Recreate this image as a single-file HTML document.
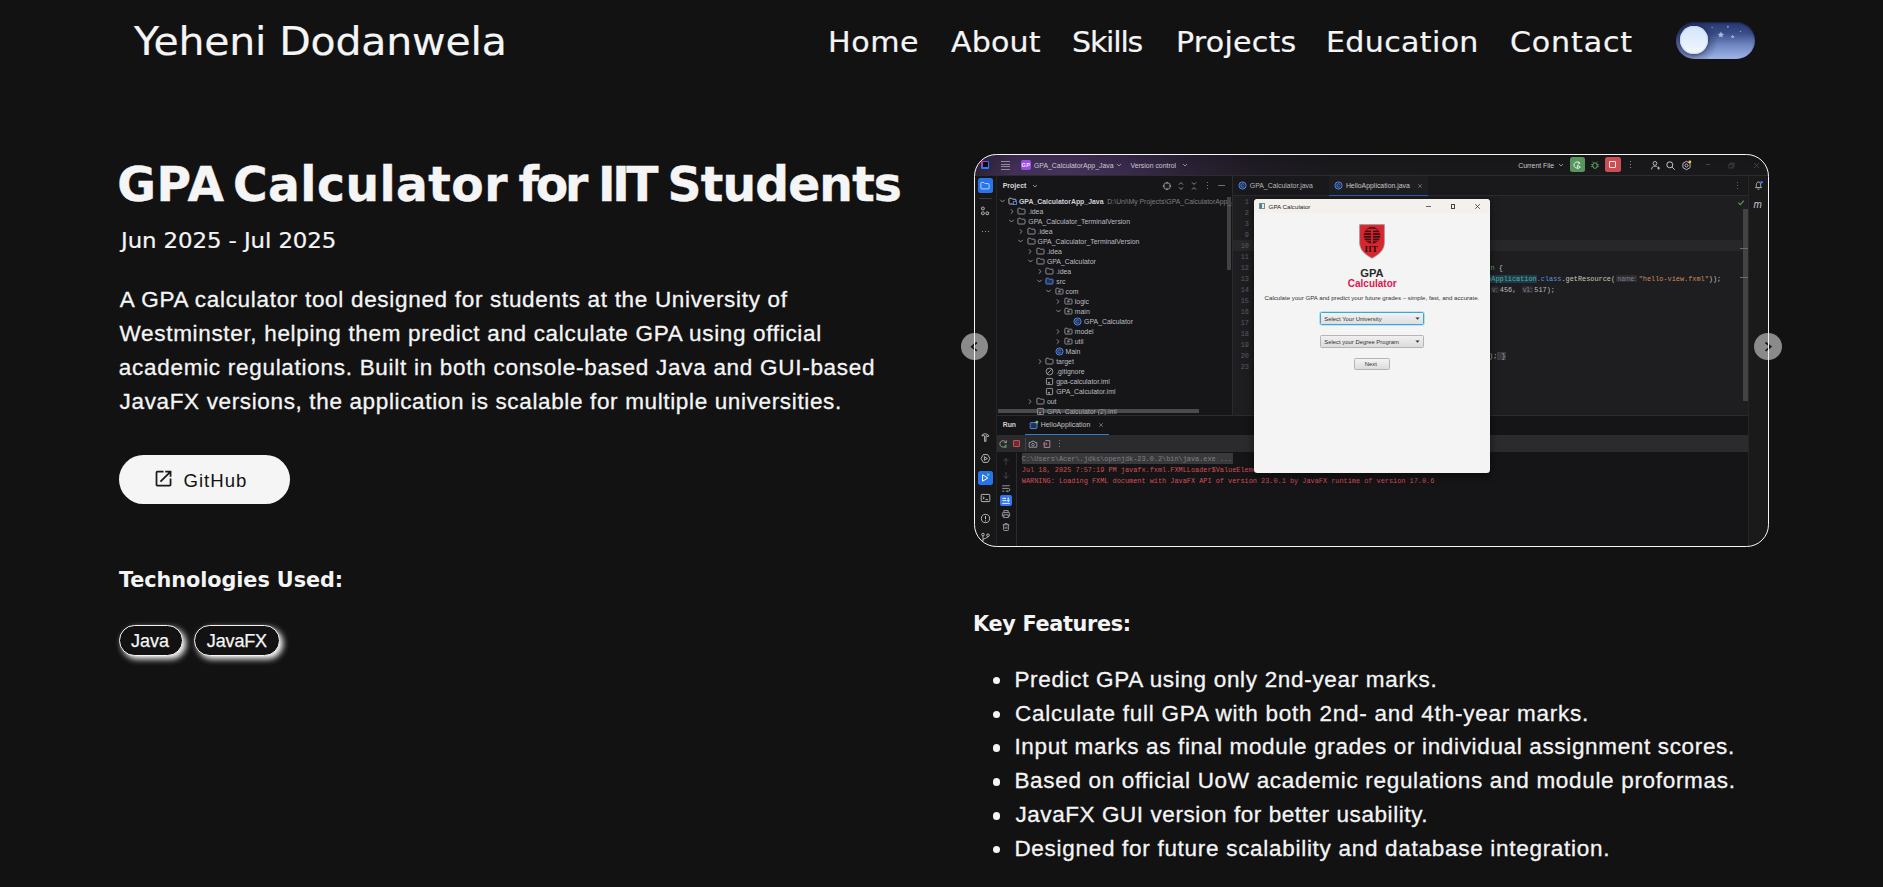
<!DOCTYPE html>
<html lang="en">
<head>
<meta charset="utf-8">
<title>GPA Calculator for IIT Students - Yeheni Dodanwela</title>
<style>
*{box-sizing:border-box;margin:0;padding:0}
html,body{width:1883px;height:887px;overflow:hidden;background:#121212}
body{position:relative;color:#f5f5f5;font-family:"Liberation Sans",sans-serif}
.abs{position:absolute;white-space:nowrap}
.z{position:absolute;left:0;top:0;width:0;height:0}
a{color:inherit;text-decoration:none}
ul{list-style:none}
h1,h3,p{font:inherit}
li{display:block}
.pop{font-family:"DejaVu Sans","Liberation Sans",sans-serif;transform:scaleX(1.07);transform-origin:0 50%;-webkit-text-stroke:.2px #f5f5f5}
.logo{font-size:38.3px;line-height:48px;}
.nav{font-size:28.1px;line-height:36px}
.title{-webkit-text-stroke:.4px #f5f5f5;font-size:47.2px;line-height:60px;font-weight:700;font-family:"DejaVu Sans","Liberation Sans",sans-serif}
.date{font-size:21.4px;line-height:28px}
.p{font-size:22.5px;line-height:34px;-webkit-text-stroke:.3px #f5f5f5}
.h3{font-family:"DejaVu Sans","Liberation Sans",sans-serif;font-size:20.8px;line-height:30px;font-weight:700}
.li{font-size:22.5px;line-height:34px;-webkit-text-stroke:.3px #f5f5f5}
.dot{position:absolute;left:992.8px;width:7.5px;height:7.5px;border-radius:50%;background:#f5f5f5}
.btn{left:119px;top:455px;width:171px;height:49px;border-radius:25px;background:#f5f5f5;color:#121212}
.tag{top:624.9px;height:31.5px;border:1px solid #f5f5f5;border-radius:16px;box-shadow:3px 3px 6px #fff;background:#121212}
.tagt{font-size:18px;line-height:24px;-webkit-text-stroke:.25px #f5f5f5}
.gh{font-size:18.6px;line-height:26px;color:#121212}
#shot{left:974px;top:154px;width:795.2px;height:393.1px;border-radius:22px;overflow:hidden;background:#161618}
#shot div,#shot svg{position:absolute;white-space:nowrap}
#shot svg{overflow:visible}
#shot .u{font-family:"Liberation Sans",sans-serif;font-size:6.9px;line-height:10px;color:#c4c4ca}
#shot .m{font-family:"Liberation Mono",monospace;font-size:6.88px;line-height:10px}
#shot .d{font-family:"Liberation Sans",sans-serif;line-height:10px}
#shot .hint{background:#2d2d31;color:#7d8088;border-radius:1.5px;font-family:"Liberation Sans",sans-serif;font-size:6.7px;padding:0 1.3px;margin:0 1.2px}
#shotb{left:973.8px;top:153.8px;width:795.6px;height:393.5px;border:1.6px solid #f5f5f5;border-radius:22.4px;pointer-events:none}
.cbtn{width:27.4px;height:27px;border-radius:50%;background:#8a8a8a}
.cbtn svg{display:block}
</style>
</head>
<body>

<!-- header -->
<header class="z">
<a class="abs pop logo" id="logo" style="left:134.4px;top:17.71px;letter-spacing:-0.158px">Yeheni Dodanwela</a>
<nav class="z">
<a class="abs pop nav" id="n1" style="left:827.6px;top:24.71px;letter-spacing:0.568px">Home</a>
<a class="abs pop nav" id="n2" style="left:951.2px;top:24.71px;letter-spacing:0.15px">About</a>
<a class="abs pop nav" id="n3" style="left:1072.2px;top:24.71px;letter-spacing:-1.12px">Skills</a>
<a class="abs pop nav" id="n4" style="left:1175.6px;top:24.71px;letter-spacing:0.214px">Projects</a>
<a class="abs pop nav" id="n5" style="left:1326.4px;top:24.71px;letter-spacing:0.323px">Education</a>
<a class="abs pop nav" id="n6" style="left:1509.6px;top:24.71px;letter-spacing:0.8px">Contact</a>
</nav>

<!-- theme toggle -->
<div class="abs" id="toggle" style="left:1676px;top:21.5px;width:79px;height:37.5px;border-radius:19px;overflow:hidden;background:linear-gradient(180deg,#27376f 0%,#3a4c87 30%,#6f86c0 62%,#9fb5ea 100%);box-shadow:inset 0 1px 2px rgba(10,16,40,.55)">
<div class="abs" style="left:-6px;top:0;width:50px;height:38px;background:radial-gradient(ellipse 26px 24px at 22px 19px,rgba(20,28,60,.55) 0%,rgba(20,28,60,.35) 60%,rgba(20,28,60,0) 100%)"></div>
<svg class="abs" style="left:0;top:0" width="79" height="38" viewBox="0 0 79 38"><g fill="#a9c3e6"><path d="M44.900 9.600l.9 2 2.200.3-1.600 1.500.4 2.200-1.900-1.100-1.900 1.100.4-2.200-1.600-1.500 2.200-.3z" opacity=".95"/><path d="M56.600 12.700l.55 1.250 1.350.15-1 .9.300 1.350-1.200-.7-1.200.7.300-1.350-1-.9 1.350-.15z" opacity=".9"/><circle cx="36.100" cy="5.600" r=".8" opacity=".55"/><circle cx="51.900" cy="4.700" r="1" opacity=".7"/><circle cx="64.500" cy="9.500" r=".8" opacity=".7"/></g></svg>
<div class="abs" style="left:4.300px;top:4.200px;width:27.400px;height:28.400px;border-radius:50%;background:linear-gradient(180deg,#d3e4fb 0%,#e9f2ff 70%,#f2f8ff 100%);box-shadow:inset 0 0 0 .9px rgba(196,214,246,.95),0 1px 3px rgba(20,30,70,.45)"></div>
</div>

</header>

<!-- left column -->
<main class="z">
<h1 class="z">
<span class="abs title" id="t1" style="left:117.2px;top:155.3px;letter-spacing:0.7px">GPA</span>
<span class="abs title" id="t2" style="left:233px;top:155.3px;letter-spacing:0.443px">Calculator</span>
<span class="abs title" id="t3" style="left:518.6px;top:155.3px;letter-spacing:-3.3px">for</span>
<span class="abs title" id="t4" style="left:598px;top:155.3px;letter-spacing:-3.4px">IIT</span>
<span class="abs title" id="t5" style="left:667.6px;top:155.3px;letter-spacing:-0.828px">Students</span>
</h1>
<div class="abs pop date" id="date" style="left:120.8px;top:226.71px;letter-spacing:-0.1px">Jun 2025 - Jul 2025</div>
<p class="z">
<span class="abs p" id="p1" style="left:119.8px;top:283.21px;letter-spacing:0.691px">A GPA calculator tool designed for students at the University of</span>
<span class="abs p" id="p2" style="left:119.6px;top:317px;letter-spacing:0.673px">Westminster, helping them predict and calculate GPA using official</span>
<span class="abs p" id="p3" style="left:118.8px;top:350.91px;letter-spacing:0.714px">academic regulations. Built in both console-based Java and GUI-based</span>
<span class="abs p" id="p4" style="left:119.6px;top:384.8px;letter-spacing:0.644px">JavaFX versions, the application is scalable for multiple universities.</span>
</p>

<a class="z">
<span class="abs btn"></span>
<svg class="abs" style="left:153.270px;top:468.370px" width="21.070" height="21.070" viewBox="0 0 24 24"><path fill="#1a1a1a" d="M19 19H5V5h7V3H5c-1.110 0-2 .9-2 2v14c0 1.100.890 2 2 2h14c1.100 0 2-.9 2-2v-7h-2v7zM14 3v2h3.590l-9.830 9.830 1.410 1.410L19 6.410V10h2V3h-7z"/></svg>
<span class="abs gh" id="gh" style="left:183.4px;top:467.61px;letter-spacing:1.04px">GitHub</span>
</a>

<h3 class="abs h3" id="h3a" style="left:119px;top:565px;letter-spacing:-0.083px">Technologies Used:</h3>
<div class="abs tag" style="left:119px;width:63.6px"></div>
<div class="abs tag" style="left:194px;width:86px"></div>
<div class="abs tagt" id="tg1" style="left:131px;top:629px;letter-spacing:0.033px">Java</div>
<div class="abs tagt" id="tg2" style="left:206.8px;top:629px;letter-spacing:-0.14px">JavaFX</div>

<!-- right column -->
<!-- IDE-START -->
<div class="abs" id="shot">
<div style="left:0px;top:0px;width:796px;height:394px;background:#161618"></div>
<div style="left:0px;top:0px;width:796px;height:21.5px;background:linear-gradient(180deg,rgba(8,6,12,.2) 0%,rgba(8,6,12,.06) 55%,rgba(8,6,12,0) 100%),linear-gradient(90deg,#2b2138 0%,#43305a 5%,#45325c 12%,#3b2b4e 19%,#2b2236 27%,#201c25 35%,#1a1a1d 45%,#19191b 100%);border-bottom:1px solid #2c2c30"></div>
<div style="left:0px;top:21.5px;width:22.6px;height:372.5px;background:#171718;border-right:1px solid #242426"></div>
<div style="left:774.1px;top:21.5px;width:21.9px;height:372.5px;background:#1a1a1b;border-left:1px solid #262629"></div>
<div style="left:22.6px;top:21.5px;width:235px;height:239.1px;background:#161618"></div>
<div style="left:257.6px;top:21.5px;width:516.5px;height:239.1px;background:#1e1e20;border-left:1px solid #2b2b2f"></div>
<div style="left:257.6px;top:21.5px;width:516.5px;height:20.4px;background:#19191b;border-left:1px solid #2b2b2f;border-bottom:1px solid #2b2b2f"></div>
<div style="left:22.6px;top:260.6px;width:751.5px;height:133.4px;background:#151416;border-top:1px solid #2b2b2f"></div>
<div style="left:22.6px;top:280.6px;width:751.5px;height:17.9px;background:#2b2b2d"></div>
<div style="left:7.4px;top:6.8px;width:7.7px;height:8px;background:linear-gradient(135deg,#ff2f7e 0%,#b838d6 22%,#2a78ee 55%,#1f8cff 100%);border-radius:1.2px"></div>
<div style="left:8.7px;top:8.1px;width:5.1px;height:5.4px;background:#0c0c0d"></div>
<div style="left:27.2px;top:7.3px;width:8.6px;height:0.7px;background:#8f8b97"></div>
<div style="left:27.2px;top:9.7px;width:8.6px;height:0.7px;background:#8f8b97"></div>
<div style="left:27.2px;top:12.1px;width:8.6px;height:0.7px;background:#8f8b97"></div>
<div style="left:27.2px;top:14.5px;width:8.6px;height:0.7px;background:#8f8b97"></div>
<div style="left:46.5px;top:5.9px;width:10.4px;height:10px;background:#9a4fe0;border-radius:2px"></div>
<div class="u" style="left:47.6px;top:6.1px;font-size:5.6px;font-weight:700;color:#f0e6ff;letter-spacing:.2px">GP</div>
<div class="u" style="left:60px;top:6.8px;color:#c9c9cf;font-size:6.9px">GPA_CalculatorApp_Java</div>
<svg style="left:141.5px;top:9.4px;" width="6" height="4" viewBox="0 0 6 4"><path d="M1 1l2 2 2-2" fill="none" stroke="#9a9aa0" stroke-width=".9"/></svg>
<div class="u" style="left:156.5px;top:6.8px;color:#c9c9cf;font-size:6.9px">Version control</div>
<svg style="left:208px;top:9.4px;" width="6" height="4" viewBox="0 0 6 4"><path d="M1 1l2 2 2-2" fill="none" stroke="#9a9aa0" stroke-width=".9"/></svg>
<div class="u" style="left:544.2px;top:6.8px;color:#c9c9cf;font-size:6.9px">Current File</div>
<svg style="left:584px;top:9.4px;" width="6" height="4" viewBox="0 0 6 4"><path d="M1 1l2 2 2-2" fill="none" stroke="#9a9aa0" stroke-width=".9"/></svg>
<div style="left:595.7px;top:3.2px;width:15.4px;height:15.1px;background:#57965c;border-radius:2.5px"></div>
<svg style="left:598.4px;top:5.8px;" width="10" height="10" viewBox="0 0 10 10"><path d="M7.6 3.2A3.1 3.1 0 1 0 5 8.1" fill="none" stroke="#e9f5ea" stroke-width="1"/><path d="M5.6 5.2v3.6l2.8-1.8z" fill="none" stroke="#e9f5ea" stroke-width=".9" stroke-linejoin="round"/><path d="M6.3 1.6l1.6 1.6-2 .9" fill="none" stroke="#e9f5ea" stroke-width=".9"/></svg>
<svg style="left:616.2px;top:6px;" width="10" height="10" viewBox="0 0 10 10"><ellipse cx="5" cy="5.6" rx="2.2" ry="2.8" fill="none" stroke="#5fad65" stroke-width="1"/><path d="M3.4 2.6l-.9-1M6.6 2.6l.9-1M2.8 4.6H1.2M2.8 6.6H1.2M7.2 4.6h1.6M7.2 6.6h1.6" stroke="#5fad65" stroke-width=".9" fill="none"/></svg>
<div style="left:631px;top:3.2px;width:15.7px;height:15.1px;background:#c94f54;border-radius:2.5px"></div>
<div style="left:635.3px;top:7.2px;width:7.1px;height:7.1px;border:1px solid #fbeaea;border-radius:1px"></div>
<div style="left:655.9px;top:6.9px;width:1.2px;height:1.2px;background:#b4b4ba;border-radius:50%"></div>
<div style="left:655.9px;top:9.9px;width:1.2px;height:1.2px;background:#b4b4ba;border-radius:50%"></div>
<div style="left:655.9px;top:12.9px;width:1.2px;height:1.2px;background:#b4b4ba;border-radius:50%"></div>
<svg style="left:675.7px;top:5.5px;" width="11" height="11" viewBox="0 0 11 11"><circle cx="5" cy="3.4" r="1.9" fill="none" stroke="#c4c4ca" stroke-width=".9"/><path d="M1.6 9.4c0-2.2 1.5-3.3 3.4-3.3 1 0 1.8.3 2.4.8" fill="none" stroke="#c4c4ca" stroke-width=".9"/><path d="M8.6 6.6v3M7.1 8.1h3" stroke="#c4c4ca" stroke-width=".9"/></svg>
<svg style="left:690.9px;top:5.5px;" width="11" height="11" viewBox="0 0 11 11"><circle cx="4.8" cy="4.8" r="3" fill="none" stroke="#c4c4ca" stroke-width="1"/><path d="M7.1 7.1l2.6 2.6" stroke="#c4c4ca" stroke-width="1"/></svg>
<svg style="left:706.5px;top:5.5px;" width="11" height="11" viewBox="0 0 11 11"><path d="M5.5 1.3l3.6 2.1v4.2L5.5 9.7 1.9 7.6V3.4z" fill="none" stroke="#c4c4ca" stroke-width=".9"/><circle cx="5.5" cy="5.5" r="1.5" fill="none" stroke="#c4c4ca" stroke-width=".9"/><circle cx="8.9" cy="1.9" r="1.4" fill="#f2c55c"/></svg>
<div style="left:731.8px;top:10.3px;width:4.6px;height:0.8px;background:#45454a"></div>
<svg style="left:754.2px;top:7.5px;" width="7" height="7" viewBox="0 0 7 7"><rect x="1" y="2.2" width="3.8" height="3.8" fill="none" stroke="#45454a" stroke-width=".8"/><path d="M2.4 2.2V1h3.8v3.8H4.8" fill="none" stroke="#45454a" stroke-width=".8"/></svg>
<svg style="left:778.9px;top:7.5px;" width="7" height="7" viewBox="0 0 7 7"><path d="M1 1l5 5M6 1L1 6" stroke="#45454a" stroke-width=".9"/></svg>
<div style="left:3.5px;top:23.9px;width:15.6px;height:15.1px;background:#2673ea;border-radius:2.5px"></div>
<svg style="left:6.4px;top:27px;" width="10" height="9" viewBox="0 0 10 9"><path d="M.9 2.300c0-.5.3-.8.8-.8h2.100l1.100 1.100h3.400c.5 0 .8.3.8.8v3.700c0 .5-.3.8-.8.8H1.700c-.5 0-.8-.3-.8-.8z" fill="none" stroke="rgba(255,255,255,.8)" stroke-width=".85"/></svg>
<div style="left:5px;top:43.8px;width:12.5px;height:0.7px;background:#3a3a3f"></div>
<svg style="left:6.4px;top:52.3px;" width="10" height="10" viewBox="0 0 10 10"><rect x="1.6" y="1.2" width="2.6" height="2.6" rx=".6" fill="none" stroke="#c4c4ca" stroke-width=".9"/><rect x="1.6" y="6" width="2.6" height="2.6" rx=".6" fill="none" stroke="#c4c4ca" stroke-width=".9"/><rect x="6" y="6" width="2.6" height="2.6" rx=".6" fill="none" stroke="#c4c4ca" stroke-width=".9"/></svg>
<div style="left:7.6px;top:76.6px;width:1.2px;height:1.2px;background:#c4c4ca;border-radius:50%"></div>
<div style="left:10.8px;top:76.6px;width:1.2px;height:1.2px;background:#c4c4ca;border-radius:50%"></div>
<div style="left:14px;top:76.6px;width:1.2px;height:1.2px;background:#c4c4ca;border-radius:50%"></div>
<svg style="left:5.9px;top:278.4px;" width="11" height="11" viewBox="0 0 11 11"><path d="M2 3.2c1-1.4 3.6-2 5.6-.6l1.4 1.2-.9 1-1.3-1H6v5.6H4.6V3.8c-.9-.4-1.8-.3-2.6.2z" fill="none" stroke="#c4c4ca" stroke-width=".9" stroke-linejoin="round"/></svg>
<svg style="left:5.9px;top:298.6px;" width="11" height="11" viewBox="0 0 11 11"><path d="M3.3 1.6h4.4l2.2 3.9-2.2 3.9H3.3L1.1 5.5z" fill="none" stroke="#c4c4ca" stroke-width=".9" stroke-linejoin="round"/><path d="M4.4 3.7v3.6l2.9-1.8z" fill="none" stroke="#c4c4ca" stroke-width=".9" stroke-linejoin="round"/></svg>
<div style="left:3.5px;top:316.9px;width:15.6px;height:14.3px;background:#2673ea;border-radius:2.5px"></div>
<svg style="left:6.2px;top:319.2px;" width="10" height="10" viewBox="0 0 10 10"><path d="M2.6 1.8v6.4l5.2-3.2z" fill="none" stroke="#fff" stroke-width="1" stroke-linejoin="round"/><circle cx="8.2" cy="1.8" r="1.3" fill="#5fd068"/></svg>
<svg style="left:5.9px;top:339.1px;" width="11" height="10" viewBox="0 0 11 10"><rect x="1.2" y="1.4" width="8.6" height="7.2" rx=".8" fill="none" stroke="#c4c4ca" stroke-width=".9"/><path d="M2.8 3.6l1.5 1.3-1.5 1.3M5.4 6.6h2.6" fill="none" stroke="#c4c4ca" stroke-width=".9"/></svg>
<svg style="left:5.9px;top:358.8px;" width="11" height="11" viewBox="0 0 11 11"><circle cx="5.5" cy="5.5" r="4.1" fill="none" stroke="#c4c4ca" stroke-width=".9"/><path d="M5.5 3v3.2M5.5 7.4v1" stroke="#c4c4ca" stroke-width="1"/></svg>
<svg style="left:5.9px;top:378px;" width="11" height="11" viewBox="0 0 11 11"><circle cx="3" cy="2.6" r="1.3" fill="none" stroke="#c4c4ca" stroke-width=".9"/><circle cx="8" cy="3.2" r="1.3" fill="none" stroke="#c4c4ca" stroke-width=".9"/><path d="M3 3.9v5.5M8 4.5c0 2-5 1.6-5 3.6" fill="none" stroke="#c4c4ca" stroke-width=".9"/></svg>
<div class="u" style="left:28.7px;top:27px;font-weight:700;color:#d6d6dc;font-size:7px">Project</div>
<svg style="left:57.5px;top:30px;" width="6" height="4" viewBox="0 0 6 4"><path d="M1 1l2 2 2-2" fill="none" stroke="#9a9aa0" stroke-width=".9"/></svg>
<svg style="left:188.1px;top:26.5px;" width="10" height="10" viewBox="0 0 10 10"><circle cx="5" cy="5" r="3.4" fill="none" stroke="#a8a8ae" stroke-width=".8"/><path d="M5 .8v2.4M5 6.8v2.4M.8 5h2.4M6.8 5h2.4" stroke="#a8a8ae" stroke-width=".8"/></svg>
<svg style="left:202.7px;top:26.5px;" width="8" height="10" viewBox="0 0 8 10"><path d="M2 3.6l2-2 2 2M2 6.4l2 2 2-2" fill="none" stroke="#a8a8ae" stroke-width=".8"/></svg>
<svg style="left:216px;top:26.5px;" width="8" height="10" viewBox="0 0 8 10"><path d="M2 1.4l2 2 2-2M2 8.6l2-2 2 2" fill="none" stroke="#a8a8ae" stroke-width=".8"/></svg>
<div style="left:233.1px;top:28.4px;width:1.1px;height:1.1px;background:#9a9aa0;border-radius:50%"></div>
<div style="left:233.1px;top:31.1px;width:1.1px;height:1.1px;background:#9a9aa0;border-radius:50%"></div>
<div style="left:233.1px;top:33.8px;width:1.1px;height:1.1px;background:#9a9aa0;border-radius:50%"></div>
<div style="left:243.6px;top:31.2px;width:7px;height:0.8px;background:#6e6e74"></div>
<div style="left:23.6px;top:41px;width:234px;height:219.6px;overflow:hidden">
<svg style="left:1.3px;top:3.2px;" width="7" height="6" viewBox="0 0 7 6"><path d="M1.3 1.8l2.2 2.2 2.2-2.2" fill="none" stroke="#9a9aa0" stroke-width=".9"/></svg>
<svg style="left:10.5px;top:2px;" width="9" height="8" viewBox="0 0 9 8"><path d="M.9 1.9c0-.4.3-.7.7-.7h1.8l.9 1h3c.4 0 .7.3.7.7v3.4c0 .4-.3.7-.7.7H1.6c-.4 0-.7-.3-.7-.7z" fill="none" stroke="#c4c4ca" stroke-width=".9"/><rect x="5.4" y="4.6" width="3" height="3" fill="#161618" stroke="#548af7" stroke-width=".8"/></svg>
<div class="u" style="left:21.4px;top:1.6px;color:#d0d0d6;font-size:6.9px"><b>GPA_CalculatorApp_Java</b><span style="color:#7d7d84;font-weight:400"> &nbsp;D:\Uni\My Projects\GPA_CalculatorApp_Java</span></div>
<svg style="left:11.1px;top:12.72px;" width="6" height="7" viewBox="0 0 6 7"><path d="M1.8 1.3l2.2 2.2-2.2 2.2" fill="none" stroke="#9a9aa0" stroke-width=".9"/></svg>
<svg style="left:19.8px;top:12.02px;" width="9" height="8" viewBox="0 0 9 8"><path d="M.9 1.9c0-.4.3-.7.7-.7h1.8l.9 1h3c.4 0 .7.3.7.7v3.4c0 .4-.3.7-.7.7H1.6c-.4 0-.7-.3-.7-.7z" fill="none" stroke="#98989e" stroke-width=".9"/></svg>
<div class="u" style="left:30.7px;top:11.62px;color:#bdbdc3;font-size:6.9px">.idea</div>
<svg style="left:10.6px;top:23.24px;" width="7" height="6" viewBox="0 0 7 6"><path d="M1.3 1.8l2.2 2.2 2.2-2.2" fill="none" stroke="#9a9aa0" stroke-width=".9"/></svg>
<svg style="left:19.8px;top:22.04px;" width="9" height="8" viewBox="0 0 9 8"><path d="M.9 1.9c0-.4.3-.7.7-.7h1.8l.9 1h3c.4 0 .7.3.7.7v3.4c0 .4-.3.7-.7.7H1.6c-.4 0-.7-.3-.7-.7z" fill="none" stroke="#98989e" stroke-width=".9"/></svg>
<div class="u" style="left:30.7px;top:21.64px;color:#bdbdc3;font-size:6.9px">GPA_Calculator_TerminalVersion</div>
<svg style="left:20.4px;top:32.76px;" width="6" height="7" viewBox="0 0 6 7"><path d="M1.8 1.3l2.2 2.2-2.2 2.2" fill="none" stroke="#9a9aa0" stroke-width=".9"/></svg>
<svg style="left:29.1px;top:32.06px;" width="9" height="8" viewBox="0 0 9 8"><path d="M.9 1.9c0-.4.3-.7.7-.7h1.8l.9 1h3c.4 0 .7.3.7.7v3.4c0 .4-.3.7-.7.7H1.6c-.4 0-.7-.3-.7-.7z" fill="none" stroke="#98989e" stroke-width=".9"/></svg>
<div class="u" style="left:40px;top:31.66px;color:#bdbdc3;font-size:6.9px">.idea</div>
<svg style="left:19.9px;top:43.28px;" width="7" height="6" viewBox="0 0 7 6"><path d="M1.3 1.8l2.2 2.2 2.2-2.2" fill="none" stroke="#9a9aa0" stroke-width=".9"/></svg>
<svg style="left:29.1px;top:42.08px;" width="9" height="8" viewBox="0 0 9 8"><path d="M.9 1.9c0-.4.3-.7.7-.7h1.8l.9 1h3c.4 0 .7.3.7.7v3.4c0 .4-.3.7-.7.7H1.6c-.4 0-.7-.3-.7-.7z" fill="none" stroke="#98989e" stroke-width=".9"/></svg>
<div class="u" style="left:40px;top:41.68px;color:#bdbdc3;font-size:6.9px">GPA_Calculator_TerminalVersion</div>
<svg style="left:29.7px;top:52.8px;" width="6" height="7" viewBox="0 0 6 7"><path d="M1.8 1.3l2.2 2.2-2.2 2.2" fill="none" stroke="#9a9aa0" stroke-width=".9"/></svg>
<svg style="left:38.4px;top:52.1px;" width="9" height="8" viewBox="0 0 9 8"><path d="M.9 1.9c0-.4.3-.7.7-.7h1.8l.9 1h3c.4 0 .7.3.7.7v3.4c0 .4-.3.7-.7.7H1.6c-.4 0-.7-.3-.7-.7z" fill="none" stroke="#98989e" stroke-width=".9"/></svg>
<div class="u" style="left:49.3px;top:51.7px;color:#bdbdc3;font-size:6.9px">.idea</div>
<svg style="left:29.2px;top:63.32px;" width="7" height="6" viewBox="0 0 7 6"><path d="M1.3 1.8l2.2 2.2 2.2-2.2" fill="none" stroke="#9a9aa0" stroke-width=".9"/></svg>
<svg style="left:38.4px;top:62.12px;" width="9" height="8" viewBox="0 0 9 8"><path d="M.9 1.9c0-.4.3-.7.7-.7h1.8l.9 1h3c.4 0 .7.3.7.7v3.4c0 .4-.3.7-.7.7H1.6c-.4 0-.7-.3-.7-.7z" fill="none" stroke="#98989e" stroke-width=".9"/></svg>
<div class="u" style="left:49.3px;top:61.72px;color:#bdbdc3;font-size:6.9px">GPA_Calculator</div>
<svg style="left:39px;top:72.84px;" width="6" height="7" viewBox="0 0 6 7"><path d="M1.8 1.3l2.2 2.2-2.2 2.2" fill="none" stroke="#9a9aa0" stroke-width=".9"/></svg>
<svg style="left:47.7px;top:72.14px;" width="9" height="8" viewBox="0 0 9 8"><path d="M.9 1.9c0-.4.3-.7.7-.7h1.8l.9 1h3c.4 0 .7.3.7.7v3.4c0 .4-.3.7-.7.7H1.6c-.4 0-.7-.3-.7-.7z" fill="none" stroke="#98989e" stroke-width=".9"/></svg>
<div class="u" style="left:58.6px;top:71.74px;color:#bdbdc3;font-size:6.9px">.idea</div>
<svg style="left:38.5px;top:83.36px;" width="7" height="6" viewBox="0 0 7 6"><path d="M1.3 1.8l2.2 2.2 2.2-2.2" fill="none" stroke="#9a9aa0" stroke-width=".9"/></svg>
<svg style="left:47.7px;top:82.16px;" width="9" height="8" viewBox="0 0 9 8"><path d="M.9 1.9c0-.4.3-.7.7-.7h1.8l.9 1h3c.4 0 .7.3.7.7v3.4c0 .4-.3.7-.7.7H1.6c-.4 0-.7-.3-.7-.7z" fill="#25324d" stroke="#548af7" stroke-width=".9"/></svg>
<div class="u" style="left:58.6px;top:81.76px;color:#bdbdc3;font-size:6.9px">src</div>
<svg style="left:47.8px;top:93.38px;" width="7" height="6" viewBox="0 0 7 6"><path d="M1.3 1.8l2.2 2.2 2.2-2.2" fill="none" stroke="#9a9aa0" stroke-width=".9"/></svg>
<svg style="left:57px;top:92.18px;" width="9" height="8" viewBox="0 0 9 8"><path d="M.9 1.9c0-.4.3-.7.7-.7h1.8l.9 1h3c.4 0 .7.3.7.7v3.4c0 .4-.3.7-.7.7H1.6c-.4 0-.7-.3-.7-.7z" fill="none" stroke="#98989e" stroke-width=".9"/><rect x="3.2" y="3.4" width="2.4" height="2" fill="#8a8a90"/></svg>
<div class="u" style="left:67.9px;top:91.78px;color:#bdbdc3;font-size:6.9px">com</div>
<svg style="left:57.6px;top:102.9px;" width="6" height="7" viewBox="0 0 6 7"><path d="M1.8 1.3l2.2 2.2-2.2 2.2" fill="none" stroke="#9a9aa0" stroke-width=".9"/></svg>
<svg style="left:66.3px;top:102.2px;" width="9" height="8" viewBox="0 0 9 8"><path d="M.9 1.9c0-.4.3-.7.7-.7h1.8l.9 1h3c.4 0 .7.3.7.7v3.4c0 .4-.3.7-.7.7H1.6c-.4 0-.7-.3-.7-.7z" fill="none" stroke="#98989e" stroke-width=".9"/><rect x="3.2" y="3.4" width="2.4" height="2" fill="#8a8a90"/></svg>
<div class="u" style="left:77.2px;top:101.8px;color:#bdbdc3;font-size:6.9px">logic</div>
<svg style="left:57.1px;top:113.42px;" width="7" height="6" viewBox="0 0 7 6"><path d="M1.3 1.8l2.2 2.2 2.2-2.2" fill="none" stroke="#9a9aa0" stroke-width=".9"/></svg>
<svg style="left:66.3px;top:112.22px;" width="9" height="8" viewBox="0 0 9 8"><path d="M.9 1.9c0-.4.3-.7.7-.7h1.8l.9 1h3c.4 0 .7.3.7.7v3.4c0 .4-.3.7-.7.7H1.6c-.4 0-.7-.3-.7-.7z" fill="none" stroke="#98989e" stroke-width=".9"/><rect x="3.2" y="3.4" width="2.4" height="2" fill="#8a8a90"/></svg>
<div class="u" style="left:77.2px;top:111.82px;color:#bdbdc3;font-size:6.9px">main</div>
<svg style="left:75.6px;top:121.74px;" width="9" height="9" viewBox="0 0 9 9"><circle cx="4.5" cy="4.5" r="3.6" fill="#25324d" stroke="#548af7" stroke-width=".9"/><path d="M5.7 3.4a1.6 1.6 0 1 0 0 2.2" fill="none" stroke="#548af7" stroke-width=".8"/></svg>
<div class="u" style="left:86.5px;top:121.84px;color:#bdbdc3;font-size:6.9px">GPA_Calculator</div>
<svg style="left:57.6px;top:132.96px;" width="6" height="7" viewBox="0 0 6 7"><path d="M1.8 1.3l2.2 2.2-2.2 2.2" fill="none" stroke="#9a9aa0" stroke-width=".9"/></svg>
<svg style="left:66.3px;top:132.26px;" width="9" height="8" viewBox="0 0 9 8"><path d="M.9 1.9c0-.4.3-.7.7-.7h1.8l.9 1h3c.4 0 .7.3.7.7v3.4c0 .4-.3.7-.7.7H1.6c-.4 0-.7-.3-.7-.7z" fill="none" stroke="#98989e" stroke-width=".9"/><rect x="3.2" y="3.4" width="2.4" height="2" fill="#8a8a90"/></svg>
<div class="u" style="left:77.2px;top:131.86px;color:#bdbdc3;font-size:6.9px">model</div>
<svg style="left:57.6px;top:142.98px;" width="6" height="7" viewBox="0 0 6 7"><path d="M1.8 1.3l2.2 2.2-2.2 2.2" fill="none" stroke="#9a9aa0" stroke-width=".9"/></svg>
<svg style="left:66.3px;top:142.28px;" width="9" height="8" viewBox="0 0 9 8"><path d="M.9 1.9c0-.4.3-.7.7-.7h1.8l.9 1h3c.4 0 .7.3.7.7v3.4c0 .4-.3.7-.7.7H1.6c-.4 0-.7-.3-.7-.7z" fill="none" stroke="#98989e" stroke-width=".9"/><rect x="3.2" y="3.4" width="2.4" height="2" fill="#8a8a90"/></svg>
<div class="u" style="left:77.2px;top:141.88px;color:#bdbdc3;font-size:6.9px">util</div>
<svg style="left:57px;top:151.8px;" width="9" height="9" viewBox="0 0 9 9"><circle cx="4.5" cy="4.5" r="3.6" fill="#25324d" stroke="#548af7" stroke-width=".9"/><path d="M5.7 3.4a1.6 1.6 0 1 0 0 2.2" fill="none" stroke="#548af7" stroke-width=".8"/></svg>
<div class="u" style="left:67.9px;top:151.9px;color:#bdbdc3;font-size:6.9px">Main</div>
<svg style="left:39px;top:163.02px;" width="6" height="7" viewBox="0 0 6 7"><path d="M1.8 1.3l2.2 2.2-2.2 2.2" fill="none" stroke="#9a9aa0" stroke-width=".9"/></svg>
<svg style="left:47.7px;top:162.32px;" width="9" height="8" viewBox="0 0 9 8"><path d="M.9 1.9c0-.4.3-.7.7-.7h1.8l.9 1h3c.4 0 .7.3.7.7v3.4c0 .4-.3.7-.7.7H1.6c-.4 0-.7-.3-.7-.7z" fill="none" stroke="#98989e" stroke-width=".9"/></svg>
<div class="u" style="left:58.6px;top:161.92px;color:#bdbdc3;font-size:6.9px">target</div>
<svg style="left:47.7px;top:171.84px;" width="9" height="9" viewBox="0 0 9 9"><circle cx="4.5" cy="4.5" r="3.4" fill="none" stroke="#a0a0a6" stroke-width=".9"/><path d="M2.2 6.8l4.6-4.6" stroke="#a0a0a6" stroke-width=".9"/></svg>
<div class="u" style="left:58.6px;top:171.94px;color:#bdbdc3;font-size:6.9px">.gitignore</div>
<svg style="left:47.7px;top:181.86px;" width="9" height="9" viewBox="0 0 9 9"><rect x="1.4" y="1.4" width="6.2" height="6.2" rx=".7" fill="none" stroke="#a0a0a6" stroke-width=".9"/><rect x="2.8" y="5" width="2.2" height="1.6" fill="#8a8a90"/></svg>
<div class="u" style="left:58.6px;top:181.96px;color:#bdbdc3;font-size:6.9px">gpa-calculator.iml</div>
<svg style="left:47.7px;top:191.88px;" width="9" height="9" viewBox="0 0 9 9"><rect x="1.4" y="1.4" width="6.2" height="6.2" rx=".7" fill="none" stroke="#a0a0a6" stroke-width=".9"/><rect x="2.8" y="5" width="2.2" height="1.6" fill="#8a8a90"/></svg>
<div class="u" style="left:58.6px;top:191.98px;color:#bdbdc3;font-size:6.9px">GPA_Calculator.iml</div>
<svg style="left:29.7px;top:203.1px;" width="6" height="7" viewBox="0 0 6 7"><path d="M1.8 1.3l2.2 2.2-2.2 2.2" fill="none" stroke="#9a9aa0" stroke-width=".9"/></svg>
<svg style="left:38.4px;top:202.4px;" width="9" height="8" viewBox="0 0 9 8"><path d="M.9 1.9c0-.4.3-.7.7-.7h1.8l.9 1h3c.4 0 .7.3.7.7v3.4c0 .4-.3.7-.7.7H1.6c-.4 0-.7-.3-.7-.7z" fill="none" stroke="#98989e" stroke-width=".9"/></svg>
<div class="u" style="left:49.3px;top:202px;color:#bdbdc3;font-size:6.9px">out</div>
<svg style="left:38.4px;top:211.92px;" width="9" height="9" viewBox="0 0 9 9"><rect x="1.4" y="1.4" width="6.2" height="6.2" rx=".7" fill="none" stroke="#a0a0a6" stroke-width=".9"/><rect x="2.8" y="5" width="2.2" height="1.6" fill="#8a8a90"/></svg>
<div class="u" style="left:49.3px;top:212.02px;color:#bdbdc3;font-size:6.9px">GPA_Calculator (2).iml</div>
<div style="left:-1px;top:214.4px;width:202px;height:4.1px;background:rgba(120,120,124,.55)"></div>
<div style="left:229.7px;top:1.5px;width:3.3px;height:73.5px;background:rgba(120,120,124,.45)"></div>
</div>
<div style="left:354.8px;top:21.5px;width:99.1px;height:19.9px;background:#1e1e20"></div>
<div style="left:354.8px;top:40.9px;width:99.1px;height:1.2px;background:#2e62b8"></div>
<svg style="left:264.3px;top:26.9px;" width="9" height="9" viewBox="0 0 9 9"><circle cx="4.5" cy="4.5" r="3.6" fill="#25324d" stroke="#548af7" stroke-width=".9"/><path d="M5.7 3.4a1.6 1.6 0 1 0 0 2.2" fill="none" stroke="#548af7" stroke-width=".8"/></svg>
<div class="u" style="left:275.8px;top:26.5px;color:#b6b6bc;font-size:6.9px">GPA_Calculator.java</div>
<svg style="left:360.2px;top:26.9px;" width="9" height="9" viewBox="0 0 9 9"><circle cx="4.5" cy="4.5" r="3.6" fill="#25324d" stroke="#548af7" stroke-width=".9"/><path d="M5.7 3.4a1.6 1.6 0 1 0 0 2.2" fill="none" stroke="#548af7" stroke-width=".8"/></svg>
<div class="u" style="left:371.9px;top:26.5px;color:#c4c4ca;font-size:6.9px">HelloApplication.java</div>
<svg style="left:443px;top:28.6px;" width="6" height="6" viewBox="0 0 6 6"><path d="M1.2 1.2l3.6 3.6M4.8 1.2L1.2 4.8" stroke="#77777d" stroke-width=".8"/></svg>
<div style="left:763.3px;top:28.4px;width:1.1px;height:1.1px;background:#77777d;border-radius:50%"></div>
<div style="left:763.3px;top:31.1px;width:1.1px;height:1.1px;background:#77777d;border-radius:50%"></div>
<div style="left:763.3px;top:33.8px;width:1.1px;height:1.1px;background:#77777d;border-radius:50%"></div>
<svg style="left:779px;top:25.9px;" width="11" height="11" viewBox="0 0 11 11"><path d="M2.6 7.6c.8-.8.8-1.6.8-3 0-1.5.9-2.6 2.1-2.6s2.1 1.100 2.100 2.600c0 1.400 0 2.200.8 3z" fill="none" stroke="#c4c4ca" stroke-width=".9" stroke-linejoin="round"/><path d="M4.600 9c.5.500 1.300.500 1.800 0" fill="none" stroke="#c4c4ca" stroke-width=".9"/><circle cx="8.600" cy="2.200" r="1.300" fill="#3574f0"/></svg>
<div class="u" style="left:779.6px;top:46.4px;font-style:italic;font-size:10px;color:#c4c4ca">m</div>
<div style="left:258.6px;top:86px;width:509.4px;height:10.7px;background:#27272a"></div>
<div class="m" style="left:262px;top:43.3px;width:13px;text-align:right;color:#5a5d66">1</div>
<div class="m" style="left:262px;top:54.27px;width:13px;text-align:right;color:#5a5d66">2</div>
<div class="m" style="left:262px;top:65.23px;width:13px;text-align:right;color:#5a5d66">3</div>
<div class="m" style="left:262px;top:76.2px;width:13px;text-align:right;color:#5a5d66">9</div>
<div class="m" style="left:262px;top:87.17px;width:13px;text-align:right;color:#5a5d66">10</div>
<div class="m" style="left:262px;top:98.13px;width:13px;text-align:right;color:#5a5d66">11</div>
<div class="m" style="left:262px;top:109.1px;width:13px;text-align:right;color:#5a5d66">12</div>
<div class="m" style="left:262px;top:120.07px;width:13px;text-align:right;color:#5a5d66">13</div>
<div class="m" style="left:262px;top:131.04px;width:13px;text-align:right;color:#5a5d66">14</div>
<div class="m" style="left:262px;top:142px;width:13px;text-align:right;color:#5a5d66">15</div>
<div class="m" style="left:262px;top:152.97px;width:13px;text-align:right;color:#5a5d66">16</div>
<div class="m" style="left:262px;top:163.94px;width:13px;text-align:right;color:#5a5d66">17</div>
<div class="m" style="left:262px;top:174.9px;width:13px;text-align:right;color:#5a5d66">18</div>
<div class="m" style="left:262px;top:185.87px;width:13px;text-align:right;color:#5a5d66">19</div>
<div class="m" style="left:262px;top:196.84px;width:13px;text-align:right;color:#5a5d66">20</div>
<div class="m" style="left:262px;top:207.81px;width:13px;text-align:right;color:#5a5d66">23</div>
<div class="m" style="left:512.3px;top:108.9px;color:#bcbec4"><span style="color:#5fae6b">on</span> {</div>
<div class="m" style="left:513.2px;top:119.7px;color:#c9c9b6"><span style="background:#1f3a4a;color:#4fb3a6">oApplication</span><span style="color:#5a94d8">.class</span>.getResource(<span class="hint">name:</span><span style="color:#c98a62">"hello-view.fxml"</span>));</div>
<div class="m" style="left:515.6px;top:131.4px;color:#bcbec4"><span class="hint">v:</span>456, <span class="hint">v1:</span>517);</div>
<div class="m" style="left:515px;top:197.3px;color:#bcbec4">);<span style="background:#3a3a3e;color:#9a9aa0"> }</span></div>
<div style="left:768.5px;top:55px;width:5.1px;height:192.4px;background:#434346"></div>
<div style="left:766px;top:94.4px;width:7.6px;height:0.8px;background:#6a6a70"></div>
<div style="left:766px;top:123.1px;width:7.6px;height:0.8px;background:#6a6a70"></div>
<svg style="left:762.8px;top:45.1px;" width="8" height="7" viewBox="0 0 8 7"><path d="M1.300 3.600l2 2 3.600-4" fill="none" stroke="#4c9a52" stroke-width="1.2"/></svg>
<div class="u" style="left:28.7px;top:265.8px;color:#d0d0d6;font-size:6.9px;font-weight:700">Run</div>
<svg style="left:55px;top:265.6px;" width="10" height="10" viewBox="0 0 10 10"><rect x="1.200" y="2.600" width="6.800" height="6" rx=".8" fill="#25324d" stroke="#548af7" stroke-width=".9"/><circle cx="7.800" cy="2.200" r="1.400" fill="#5fd068"/></svg>
<div class="u" style="left:66.8px;top:265.9px;color:#c4c4ca;font-size:6.9px">HelloApplication</div>
<svg style="left:124px;top:268px;" width="6" height="6" viewBox="0 0 6 6"><path d="M1.200 1.200l3.600 3.600M4.800 1.200L1.200 4.800" stroke="#77777d" stroke-width=".8"/></svg>
<div style="left:50.5px;top:279.7px;width:84.5px;height:1.2px;background:#2e7fc8"></div>
<svg style="left:23.7px;top:284.5px;" width="10" height="10" viewBox="0 0 10 10"><path d="M7.800 3.200A3.200 3.200 0 1 0 8.200 5.600" fill="none" stroke="#a0a0a6" stroke-width=".9"/><path d="M8.400 1.400v2.200H6.200" fill="none" stroke="#a0a0a6" stroke-width=".9"/><circle cx="7.400" cy="7.800" r="1.300" fill="#4c9a52"/></svg>
<div style="left:38.8px;top:286.1px;width:6.8px;height:6.8px;background:#6b2c30;border:1px solid #c94f54;border-radius:1px"></div>
<div style="left:50.8px;top:283.5px;width:0.6px;height:12px;background:#444449"></div>
<svg style="left:54px;top:284.5px;" width="10" height="10" viewBox="0 0 10 10"><path d="M1.200 3.400h1.800l.8-1.200h2.400l.8 1.200h1.800v4.800H1.200z" fill="none" stroke="#a0a0a6" stroke-width=".9" stroke-linejoin="round"/><circle cx="5" cy="5.600" r="1.300" fill="none" stroke="#a0a0a6" stroke-width=".8"/></svg>
<svg style="left:68.3px;top:284.5px;" width="10" height="10" viewBox="0 0 10 10"><path d="M3.200 1.600h4.600v6.800H2.200V3" fill="none" stroke="#a0a0a6" stroke-width=".9"/><path d="M1 5h4.200M3.800 3.600L5.200 5 3.800 6.400" fill="none" stroke="#d8575c" stroke-width=".9"/></svg>
<div style="left:85.4px;top:286.3px;width:1.1px;height:1.1px;background:#9a9aa0;border-radius:50%"></div>
<div style="left:85.4px;top:289px;width:1.1px;height:1.1px;background:#9a9aa0;border-radius:50%"></div>
<div style="left:85.4px;top:291.7px;width:1.1px;height:1.1px;background:#9a9aa0;border-radius:50%"></div>
<div style="left:41.5px;top:298.5px;width:0.7px;height:95.5px;background:#2b2b2f"></div>
<svg style="left:27.9px;top:302.8px;" width="8" height="9" viewBox="0 0 8 9"><path d="M4 7.800V1.600M1.600 4l2.400-2.400L6.400 4" fill="none" stroke="#4a4a50" stroke-width=".9"/></svg>
<svg style="left:27.9px;top:316.5px;" width="8" height="9" viewBox="0 0 8 9"><path d="M4 1.200v6.200M1.600 5l2.400 2.400L6.400 5" fill="none" stroke="#4a4a50" stroke-width=".9"/></svg>
<svg style="left:26.9px;top:329.5px;" width="10" height="9" viewBox="0 0 10 9"><path d="M1.200 1.800h7.600M1.200 4.400h6.200a1.400 1.400 0 0 1 0 2.800H5.600M1.200 7.200h2.200M6.400 6.200l-1 1 1 1" fill="none" stroke="#a0a0a6" stroke-width=".9"/></svg>
<div style="left:26.1px;top:341.2px;width:11.7px;height:10.8px;background:#3574f0;border-radius:2px"></div>
<svg style="left:26.9px;top:342.1px;" width="10" height="9" viewBox="0 0 10 9"><path d="M1.400 2.400h3.600M1.400 4.600h3.600M1.200 7.400h7.600M7.200 1.400v4M5.600 4l1.600 1.600L8.800 4" fill="none" stroke="#fff" stroke-width=".9"/></svg>
<svg style="left:26.9px;top:354.9px;" width="10" height="10" viewBox="0 0 10 10"><path d="M2.800 3.600V1.600h4.400v2M2.800 7.200H1.400V4.200c0-.4.300-.6.600-.6h6c.300 0 .6.200.6.600v3H7.200" fill="none" stroke="#a0a0a6" stroke-width=".9"/><rect x="2.800" y="5.800" width="4.400" height="2.800" fill="none" stroke="#a0a0a6" stroke-width=".9"/></svg>
<svg style="left:26.9px;top:368.1px;" width="10" height="10" viewBox="0 0 10 10"><path d="M1.600 2.800h6.800M3.800 2.800V1.600h2.400v1.200M2.600 2.800v5c0 .4.300.7.700.7h3.400c.4 0 .7-.3.700-.7v-5M4.200 4.800v2M5.800 4.800v2" fill="none" stroke="#a0a0a6" stroke-width=".9"/></svg>
<div style="left:47.8px;top:299px;width:210.9px;height:10.8px;background:#39393c"></div>
<div class="m" style="left:47.8px;top:299.6px;color:#7d8088">C:\Users\Acer\.jdks\openjdk-23.0.2\bin\java.exe ...</div>
<div class="m" style="left:47.8px;top:310.7px;color:#d24f55">Jul 18, 2025 7:57:19 PM javafx.fxml.FXMLLoader$ValueElement processValue</div>
<div class="m" style="left:47.8px;top:321.6px;color:#d24f55">WARNING: Loading FXML document with JavaFX API of version 23.0.1 by JavaFX runtime of version 17.0.6</div>
<div style="left:280px;top:45px;width:236px;height:274px;background:#f4f4f4;border-radius:3.5px;box-shadow:0 2px 10px rgba(0,0,0,.55)"></div>
<div style="left:280px;top:45px;width:236px;height:14px;background:#f4f1ec;border-radius:3.5px 3.5px 0 0"></div>
<div style="left:284.6px;top:49.4px;width:6px;height:5.8px;background:linear-gradient(90deg,#2f8f86 0 45%,#e8eef0 45% 100%);border:.5px solid #7a8a90"></div>
<div class="d" style="left:294.6px;top:47.5px;font-size:6.200px;color:#222">GPA Calculator</div>
<div style="left:452.3px;top:51.9px;width:5px;height:0.5px;background:#666"></div>
<div style="left:476.6px;top:50px;width:4.8px;height:4.8px;border:.6px solid #444"></div>
<svg style="left:499.8px;top:48.9px;" width="7" height="7" viewBox="0 0 7 7"><path d="M1.200 1.200l4.600 4.600M5.800 1.200L1.200 5.800" stroke="#333" stroke-width=".8"/></svg>
<svg style="left:384.8px;top:70.1px;" width="26" height="35" viewBox="0 0 26 35"><path d="M.6.600h24.800v18c0 8-6.500 12.500-12.400 15.600C7.100 31.100.6 26.600.6 18.600z" fill="#d9262e" stroke="#9a9a9a" stroke-width=".8"/><circle cx="13" cy="11.400" r="8.300" fill="#3a0d10"/><path d="M4.800 8.600h16.400M4.600 11.400h16.800M4.800 14.200h16.400M6.400 6h13.200M6.400 16.800h13.200" stroke="#d9262e" stroke-width=".9"/><rect x="12.100" y="4.600" width="1.800" height="15" fill="#d9262e"/><rect x="8.600" y="4.800" width="8.800" height="1.500" fill="#d9262e"/></svg>
<div class="d" style="left:390.6px;top:90.4px;font-family:'Liberation Serif',serif;font-size:8.800px;color:#2a0a0c;letter-spacing:.2px;font-weight:700">IIT</div>
<div class="d" style="left:386.2px;top:113.9px;font-weight:700;font-size:11.200px;color:#2b2b2b">GPA</div>
<div class="d" style="left:373.8px;top:125.1px;font-weight:700;font-size:10px;color:#e0144c">Calculator</div>
<div class="d" style="left:290.6px;top:138.5px;font-size:6.130px;color:#333">Calculate your GPA and predict your future grades – simple, fast, and accurate.</div>
<div style="left:346px;top:158.3px;width:103.6px;height:12.8px;background:linear-gradient(#f2f2f2,#dedede);border:1px solid #3aa7d8;border-radius:1.5px;box-shadow:0 0 0 .6px #8fd0ee"></div>
<div class="d" style="left:350.3px;top:159.7px;font-size:5.900px;color:#333">Select Your University</div>
<svg style="left:440.7px;top:163.4px;" width="5" height="3" viewBox="0 0 5 3"><path d="M.4.400h4.200L2.500 2.800z" fill="#333"/></svg>
<div style="left:346px;top:181.3px;width:103.6px;height:12.4px;background:linear-gradient(#f0f0f0,#dcdcdc);border:.8px solid #b5b5b5;border-radius:1.5px"></div>
<div class="d" style="left:350.3px;top:182.5px;font-size:5.900px;color:#333">Select your Degree Program</div>
<svg style="left:440.7px;top:186.2px;" width="5" height="3" viewBox="0 0 5 3"><path d="M.4.400h4.200L2.500 2.800z" fill="#333"/></svg>
<div style="left:380.1px;top:204.1px;width:35.6px;height:12.4px;background:linear-gradient(#f3f3f3,#dcdcdc);border:.8px solid #b5b5b5;border-radius:1.5px"></div>
<div class="d" style="left:390.8px;top:205.3px;font-size:5.900px;color:#333">Next</div>
</div>
<div class="abs cbtn" style="left:960.9px;top:332.9px"><svg width="27" height="27" viewBox="0 0 27 27"><path d="M15.9 9.500l-5.200 4.200 5.200 4.200" fill="none" stroke="#141414" stroke-width="1.700"/></svg></div>
<div class="abs cbtn" style="left:1754.2px;top:333px"><svg width="27" height="27" viewBox="0 0 27 27"><path d="M11.500 9.500l5.200 4.200-5.200 4.200" fill="none" stroke="#141414" stroke-width="1.700"/></svg></div>
<div class="abs" id="shotb"></div>
<!-- IDE-END -->

<h3 class="abs h3" id="h3b" style="left:973px;top:609.11px;letter-spacing:-0.316px">Key Features:</h3>
<ul class="z">
<li><span class="dot" style="top:676.8px"></span><span class="abs li" id="l1" style="left:1014.4px;top:663px;letter-spacing:0.676px">Predict GPA using only 2nd-year marks.</span></li>
<li><span class="dot" style="top:710.5px"></span><span class="abs li" id="l2" style="left:1015px;top:696.61px;letter-spacing:0.764px">Calculate full GPA with both 2nd- and 4th-year marks.</span></li>
<li><span class="dot" style="top:744.4px"></span><span class="abs li" id="l3" style="left:1014.4px;top:730.4px;letter-spacing:0.656px">Input marks as final module grades or individual assignment scores.</span></li>
<li><span class="dot" style="top:778.1px"></span><span class="abs li" id="l4" style="left:1014.4px;top:764.01px;letter-spacing:0.684px">Based on official UoW academic regulations and module proformas.</span></li>
<li><span class="dot" style="top:812.0px"></span><span class="abs li" id="l5" style="left:1015.4px;top:797.81px;letter-spacing:0.575px">JavaFX GUI version for better usability.</span></li>
<li><span class="dot" style="top:845.8px"></span><span class="abs li" id="l6" style="left:1014.4px;top:831.8px;letter-spacing:0.709px">Designed for future scalability and database integration.</span></li>
</ul>
</main>

</body>
</html>
